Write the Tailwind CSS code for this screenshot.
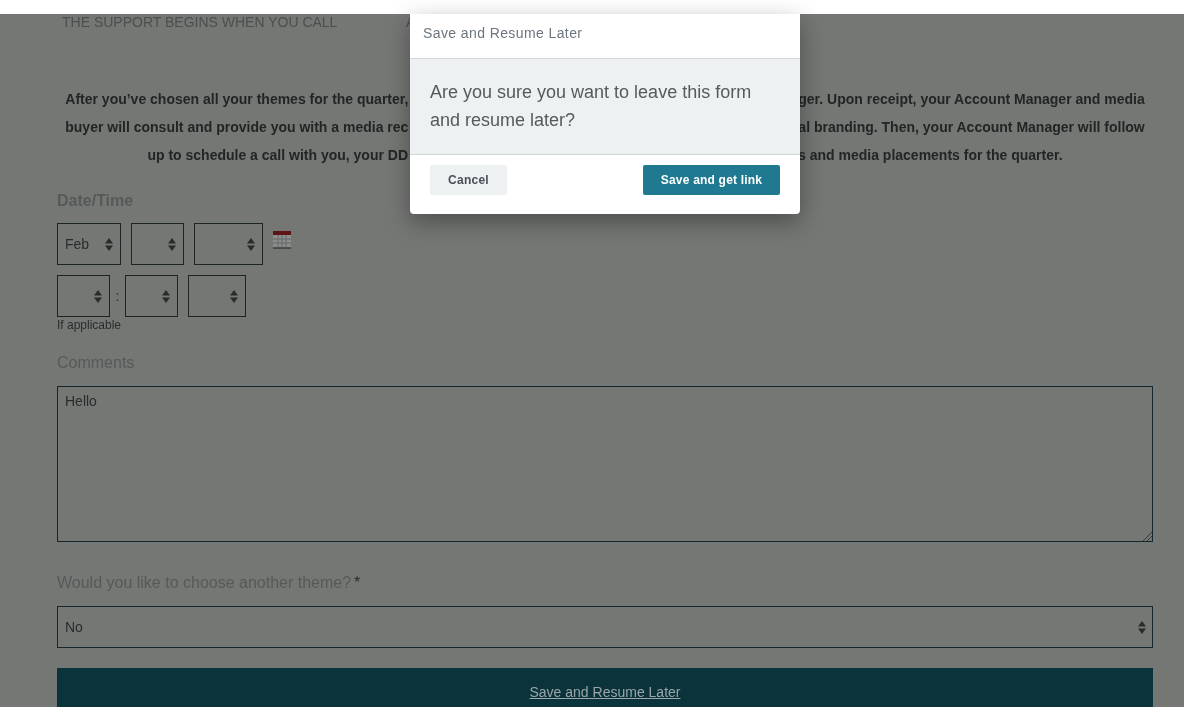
<!DOCTYPE html>
<html>
<head>
<meta charset="utf-8">
<script src="https://cdn.jsdelivr.net/npm/@tailwindcss/browser@4"></script>
</head>
<body class="bg-white">
<div class="relative w-[1184px] h-[707px] overflow-hidden bg-[#757775] font-['Liberation_Sans',Arial,sans-serif] text-[#2a2c2c]">
  <div class="h-[14px] bg-white relative z-10"></div>

  <main class="pl-[57px] pr-[31px] [will-change:transform]">
    <div class="flex h-[16px] items-center text-[14px] text-[#4d4f4e]">
      <span class="w-[349px] pl-[5px] whitespace-nowrap">THE SUPPORT BEGINS WHEN YOU CALL</span>
      <span>A</span>
    </div>

    <div class="mt-[55px] text-center text-[14px] leading-[28px] font-bold text-[#232525] whitespace-nowrap">
      <p>After you’ve chosen all your themes for the quarter, <span class="inline-block w-[386px] overflow-hidden align-top">please submit this form to your Account Mana</span>ger. Upon receipt, your Account Manager and media</p>
      <p>buyer will consult and provide you with a media rec<span class="inline-block w-[390px] overflow-hidden align-top">ommendation that aligns with your practice and loc</span>al branding. Then, your Account Manager will follow</p>
      <p>up to schedule a call with you, your DD<span class="inline-block w-[390px] overflow-hidden align-top">S, and your team to review your theme</span>s and media placements for the quarter.</p>
    </div>

    <label class="block mt-[22px] h-[20px] leading-[20px] text-[16px] font-bold text-[#575958]">Date/Time</label>

    <div class="mt-[12px] flex items-start gap-[10px]">
      <div class="w-[64px] h-[42px] border border-[#1c2526] flex items-center justify-between pl-[7px] pr-[7px] text-[14px]">Feb<svg class="w-[8px] h-[13px]" viewBox="0 0 8 13"><path d="M4 0 8 5.5H0zM0 7.5h8L4 13z" fill="#2a2c2c"/></svg></div>
      <div class="w-[53px] h-[42px] border border-[#1c2526] flex items-center justify-end pr-[7px]"><svg class="w-[8px] h-[13px]" viewBox="0 0 8 13"><path d="M4 0 8 5.5H0zM0 7.5h8L4 13z" fill="#2a2c2c"/></svg></div>
      <div class="w-[69px] h-[42px] border border-[#1c2526] flex items-center justify-end pr-[7px]"><svg class="w-[8px] h-[13px]" viewBox="0 0 8 13"><path d="M4 0 8 5.5H0zM0 7.5h8L4 13z" fill="#2a2c2c"/></svg></div>
      <svg class="w-[18px] h-[18px] mt-[8px]" viewBox="0 0 18 18">
        <rect x="0" y="0" width="18" height="17" fill="#8b8d8c"/>
        <rect x="0" y="0" width="18" height="4" fill="#5e1315"/>
        <path d="M0 8H18M0 12H18M5 4V16M9 4V16M13 4V16" stroke="#666867" stroke-width="1" fill="none"/>
        <path d="M0 17H18" stroke="#3a3c3c" stroke-width="1.5"/>
      </svg>
    </div>

    <div class="mt-[10px] flex items-center">
      <div class="w-[53px] h-[42px] border border-[#1c2526] flex items-center justify-end pr-[7px]"><svg class="w-[8px] h-[13px]" viewBox="0 0 8 13"><path d="M4 0 8 5.5H0zM0 7.5h8L4 13z" fill="#2a2c2c"/></svg></div>
      <span class="w-[15px] text-center text-[14px]">:</span>
      <div class="w-[53px] h-[42px] border border-[#1c2526] flex items-center justify-end pr-[7px]"><svg class="w-[8px] h-[13px]" viewBox="0 0 8 13"><path d="M4 0 8 5.5H0zM0 7.5h8L4 13z" fill="#2a2c2c"/></svg></div>
      <div class="ml-[10px] w-[58px] h-[42px] border border-[#1c2526] flex items-center justify-end pr-[7px]"><svg class="w-[8px] h-[13px]" viewBox="0 0 8 13"><path d="M4 0 8 5.5H0zM0 7.5h8L4 13z" fill="#2a2c2c"/></svg></div>
    </div>
    <p class="mt-[1px] h-[14px] leading-[14px] text-[12px] text-[#2a2c2c]">If applicable</p>

    <label class="block mt-[21px] h-[20px] leading-[20px] text-[16px] text-[#575958]">Comments</label>

    <div class="mt-[13px] relative h-[156px] border border-[#12282c] pt-[6px] pl-[7px] text-[14px] leading-[16px]">Hello
      <svg class="absolute right-0 bottom-0 w-[10px] h-[10px]" viewBox="0 0 10 10"><path d="M1 10 10 1M5 10 10 5" stroke="#3a3c3c" stroke-width="1" fill="none"/></svg>
    </div>

    <label class="block mt-[31px] h-[20px] leading-[20px] text-[16px] text-[#575958]">Would you like to choose another theme?<span class="ml-[3px] text-[#2a2c2c]">*</span></label>

    <div class="mt-[13px] h-[42px] border border-[#12282c] flex items-center justify-between pl-[7px] pr-[6px] text-[14px]">No<svg class="w-[8px] h-[13px]" viewBox="0 0 8 13"><path d="M4 0 8 5.5H0zM0 7.5h8L4 13z" fill="#2a2c2c"/></svg></div>

    <div class="mt-[20px] h-[60px] bg-[#0a333b] pt-[16px] text-center text-[14px] leading-[16px] text-[#9aa6a8] underline">Save and Resume Later</div>
  </main>

  <div class="absolute z-20 left-[410px] top-[14px] w-[390px] h-[200px] bg-white rounded-b-[4px] shadow-[0_8px_24px_rgba(0,0,0,0.35)] flex flex-col [will-change:transform]">
    <div class="h-[45px] shrink-0 pt-[11px] pl-[13px] text-[14px] leading-[16px] tracking-[0.4px] text-[#6c757d] whitespace-nowrap border-b border-[#d3d6d8]">Save and Resume Later</div>
    <div class="h-[96px] shrink-0 bg-[#eef1f2] border-b border-[#d3d6d8] px-[20px] pt-[19px] text-[18px] leading-[28px] text-[#555a5e]">Are you sure you want to leave this form and resume later?</div>
    <div class="flex justify-between px-[20px] pt-[10px]">
      <button class="w-[77px] h-[30px] bg-[#eef1f2] rounded-[2px] text-[12px] font-bold tracking-[0.25px] text-[#495057]">Cancel</button>
      <button class="w-[137px] h-[30px] bg-[#1f7a91] rounded-[2px] text-[12px] font-bold tracking-[0.2px] text-white">Save and get link</button>
    </div>
  </div>
</div>
</body>
</html>
